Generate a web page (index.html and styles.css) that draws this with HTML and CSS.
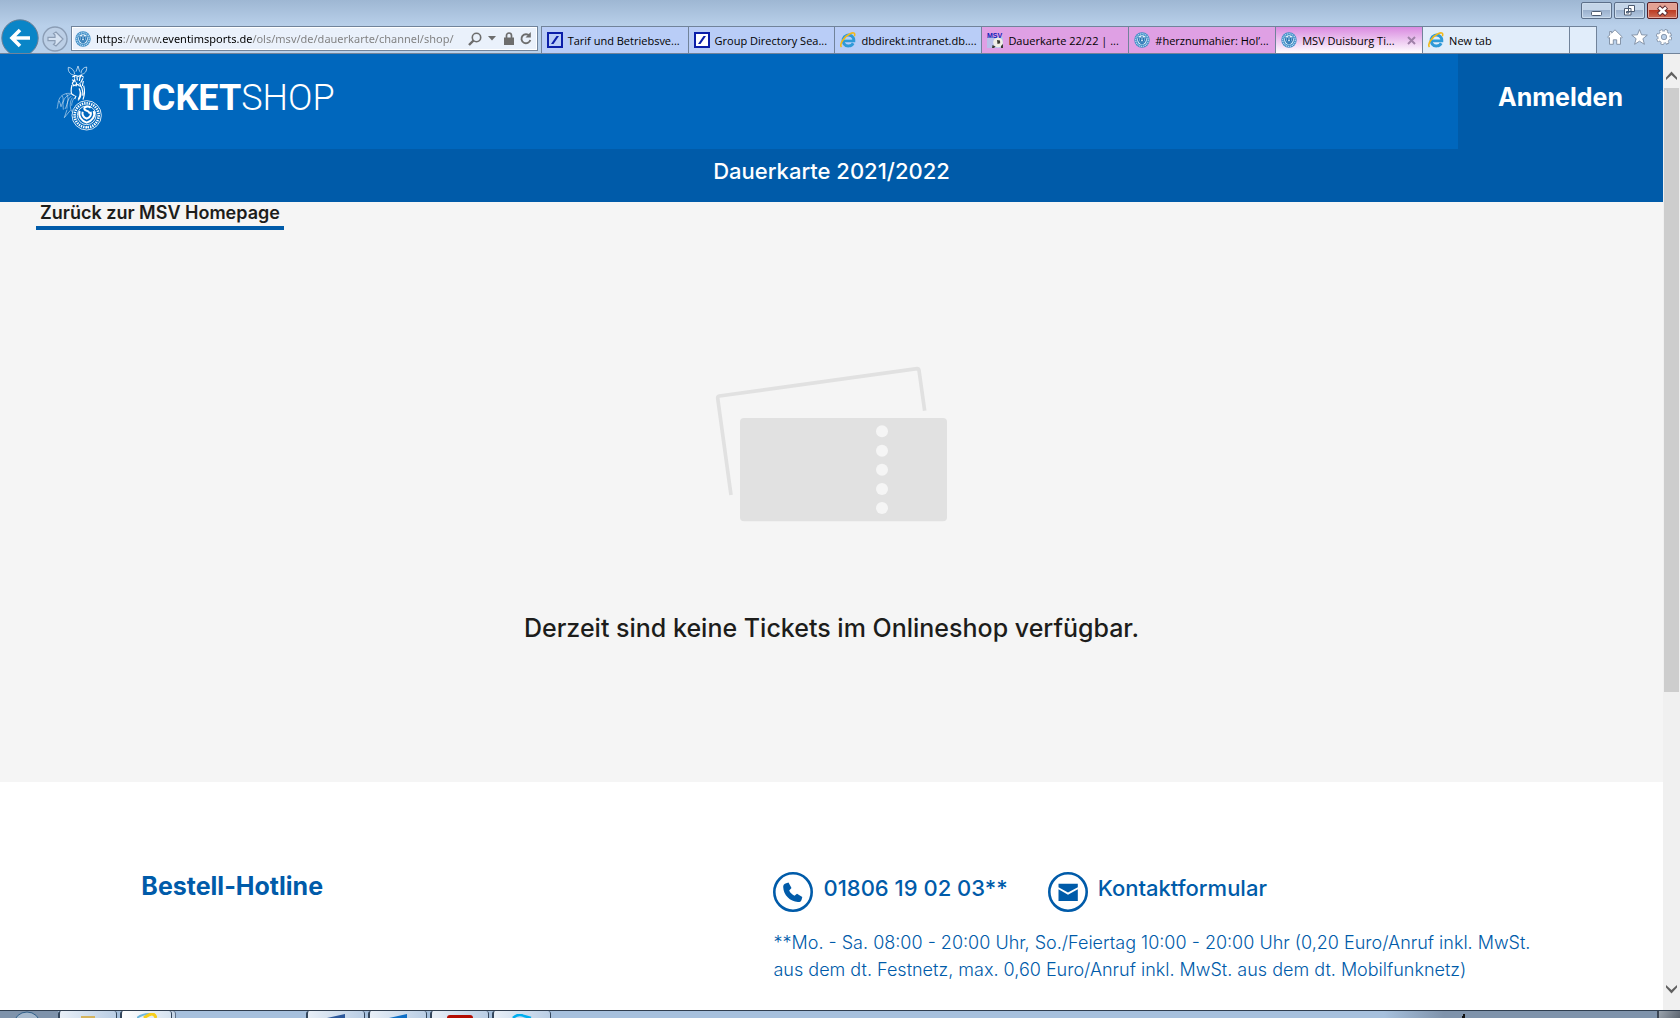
FILE: index.html
```html
<!DOCTYPE html>
<html lang="de">
<head>
<meta charset="utf-8">
<title>MSV Duisburg Ticketshop</title>
<link rel="stylesheet" href="styles.css">
</head>
<body>
<svg class="defs" aria-hidden="true">
  <symbol id="crest" viewBox="0 0 16 16">
    <circle cx="8" cy="8" r="7.7" fill="#3a8ac4"/>
    <circle cx="8" cy="8" r="6.3" fill="none" stroke="#b9dcf2" stroke-width="1.2" stroke-dasharray="1.2 .7"/>
    <circle cx="8" cy="8" r="4.8" fill="#e4f1fa"/>
    <path d="M5 5C3.800 9 6 11.500 8 12c2-.5 4.200-3 3-7M6.500 5.500c-.6 3 .5 4.500 1.500 5 1-.5 2.100-2 1.500-5M8 4v4" fill="none" stroke="#1d6fb0" stroke-width="1.200"/>
  </symbol>
  <symbol id="db" viewBox="0 0 16 16">
    <path d="M1 1h14v14H1z" fill="none" stroke="#0a1ea8" stroke-width="2"/>
    <path d="M4 12h2.500L12 4H9.500z" fill="#0a1ea8"/>
  </symbol>
  <symbol id="ie" viewBox="0 0 16 16">
    <path d="M13.200 11.200A5.500 5.500 0 1 1 13.900 8.800H4" fill="none" stroke="#2f9ad8" stroke-width="2.800"/>
    <path d="M4 7.500h8" stroke="#7cc8ee" stroke-width="1"/>
    <path d="M1.500 15C-1 12.500 4 4.500 10 1.700c4-1.800 5.500-.4 4.300 2.600" fill="none" stroke="#f2b91c" stroke-width="1.600"/>
  </symbol>
</svg>

<div class="browser">
  <header class="chrome">
    <div class="window-controls">
      <button class="wc" aria-label="Minimieren"><svg width="29" height="15" viewBox="0 0 29 15"><rect x="9.500" y="8.500" width="10" height="4" rx="1" fill="#fff" stroke="#4c5b70"/></svg></button>
      <button class="wc" aria-label="Verkleinern"><svg width="29" height="15" viewBox="0 0 29 15"><path d="M13.500 2.500h6v6h-6zM9.500 5.500h6.500v6.500H9.500z" fill="#fff" stroke="#4c5b70"/><path d="M11.500 8.500h2.500v1.500h-2.500z" fill="#8fa5c0" stroke="#4c5b70"/></svg></button>
      <button class="wc wc-close" aria-label="Schließen"><svg width="29" height="15" viewBox="0 0 29 15"><path d="M10.500 4l8 7.500M18.500 4l-8 7.500" stroke="#5b2a30" stroke-width="4.500"/><path d="M11 4.500l7 6.500M18 4.500L11 11" stroke="#fff" stroke-width="2.500"/></svg></button>
    </div>
    <div class="toolbar">
      <button class="nav-back" aria-label="Zurück">
        <svg width="38" height="38" viewBox="0 0 38 38"><circle cx="19" cy="19" r="18.200" fill="#0a85c7" stroke="#6b7f96" stroke-width="1"/><path d="M19 11l-8 8 8 8M11.500 19H29" fill="none" stroke="#fff" stroke-width="3.600"/></svg>
      </button>
      <button class="nav-forward" aria-label="Vorwärts">
        <svg width="26" height="26" viewBox="0 0 26 26"><circle cx="13" cy="13" r="12" fill="#bccfe6" stroke="#8b9db5" stroke-width="1.400"/><path d="M6 11.300h7V9l-1.500-1.500L14 6l7 7-7 7-2.500-1.500L13 17v-2.300H6z" fill="#d5e2f2" stroke="#8b9db5" stroke-width="1.200"/></svg>
      </button>
      <div class="address">
        <svg width="16" height="16"><use href="#crest"/></svg>
        <input class="url" type="text" aria-label="Adresse" value="https://www.eventimsports.de/ols/msv/de/dauerkarte/channel/shop/">
        <button class="tool" aria-label="Suchen"><svg width="14" height="14" viewBox="0 0 14 14"><circle cx="8.500" cy="5.500" r="4.200" fill="none" stroke="#6d6d6d" stroke-width="1.600"/><path d="M5.500 8.500L1 13" stroke="#6d6d6d" stroke-width="2.400"/></svg></button>
        <button class="tool" aria-label="Verlauf"><svg width="8" height="5" viewBox="0 0 8 5"><path d="M0 0h8L4 4.500z" fill="#6d6d6d"/></svg></button>
        <svg class="lock" width="10" height="13" viewBox="0 0 10 13"><path d="M2.500 6V3.500a2.500 2.500 0 0 1 5 0V6" fill="none" stroke="#6d6d6d" stroke-width="1.700"/><path d="M0 5.500h10V13H0z" fill="#6d6d6d"/></svg>
        <button class="tool" aria-label="Aktualisieren"><svg width="12" height="13" viewBox="0 0 12 13"><path d="M9.500 4A4.500 4.500 0 1 0 10.300 8" fill="none" stroke="#6d6d6d" stroke-width="1.900"/><path d="M10.800 0v5.500H5.500z" fill="#6d6d6d"/></svg></button>
      </div>
      <div class="tabs" role="tablist">
        <button class="tab tab-blue" role="tab"><svg width="16" height="16"><use href="#db"/></svg><span>Tarif und Betriebsve...</span></button>
        <button class="tab tab-blue" role="tab"><svg class="on-white" width="16" height="16"><use href="#db"/></svg><span>Group Directory Sea...</span></button>
        <button class="tab tab-blue" role="tab"><svg width="16" height="16"><use href="#ie"/></svg><span>dbdirekt.intranet.db....</span></button>
        <button class="tab tab-pink" role="tab"><svg width="16" height="16" viewBox="0 0 16 16"><path d="M0 5h16v11H0z" fill="#b9c0ea"/><circle cx="11" cy="10.500" r="4.800" fill="#f1eee6"/><path d="M10 8l3 .5.2 2.800-2.700.6zM5.500 13l3 1.500L7 16H5zM14 14l2-2v4h-2z" fill="#3b3a33"/><text x="0" y="5.500" font-family="Liberation Sans, sans-serif" font-size="7" font-weight="700" fill="#1024b8">MSV</text></svg><span>Dauerkarte 22/22 | ...</span></button>
        <button class="tab tab-pink" role="tab"><svg width="16" height="16"><use href="#crest"/></svg><span>#herznumahier: Hol’...</span></button>
        <button class="tab tab-active" role="tab" aria-selected="true"><svg width="16" height="16"><use href="#crest"/></svg><span>MSV Duisburg Ti...</span><svg class="tab-close" width="9" height="9" viewBox="0 0 9 9"><path d="M1 1l7 7M8 1L1 8" stroke="#a080a8" stroke-width="2"/></svg></button>
        <button class="tab" role="tab"><svg width="16" height="16"><use href="#ie"/></svg><span>New tab</span></button>
        <button class="tab tab-new" aria-label="Neuer Tab"></button>
      </div>
      <div class="actions">
        <button class="tool" aria-label="Startseite"><svg width="16" height="16" viewBox="0 0 16 16"><path d="M8 .8L15.300 8l-1 1.200-.8-.6v6.700H9.700v-4.500H6.300v4.500H2.500V8.600l-.8.6L.7 8l2-2V2.500h2v1.600z" fill="#fff" stroke="#7c8ba0" stroke-width=".9"/></svg></button>
        <button class="tool" aria-label="Favoriten"><svg width="17" height="16" viewBox="0 0 17 16"><path d="M8.500.6l2.100 5.200 5.700.3-4.400 3.600 1.500 5.600-4.900-3.100-4.900 3.100 1.500-5.600L.7 6.100l5.700-.3z" fill="#fff" stroke="#7c8ba0" stroke-width=".9"/></svg></button>
        <button class="tool" aria-label="Extras"><svg width="16" height="16" viewBox="0 0 16 16"><circle cx="8" cy="8" r="6.400" fill="none" stroke="#7c8ba0" stroke-width="3.200" stroke-dasharray="2.900 2.120"/><circle cx="8" cy="8" r="4.500" fill="none" stroke="#7c8ba0" stroke-width="4"/><circle cx="8" cy="8" r="6.200" fill="none" stroke="#fff" stroke-width="2" stroke-dasharray="2.200 2.670" stroke-dashoffset="-.2"/><circle cx="8" cy="8" r="4.300" fill="#b9cfe8" stroke="#fff" stroke-width="2.800"/><circle cx="8" cy="8" r="2.700" fill="none" stroke="#7c8ba0" stroke-width=".8"/></svg></button>
      </div>
    </div>
  </header>

  <div class="viewport">
    <div class="page">
      <div class="site-header">
        <a class="brand" href="#">
          <svg class="zebra" width="48" height="66" viewBox="48 30 144 198" fill="none" stroke="#fff">
            <path d="M103 60C92 60 83 50 85 37c10 1 18 9 19 20M122 58c12 0 19-9 18-22-10 1-16 8-17 18M108 50l6-17 5 17" stroke-width="2.500" opacity=".8"/>
            <path d="M97 66l8-5 9 3 10-3 7 6M96 74l6 3-5 8 5 9M103 70l3 12M111 66l1 10M120 66l-2 12M129 70l-7 13M110 82l-2 12M119 84l4 12M130 78l-3 15M101 62l4 6M124 60l-4 8" stroke-width="3.500"/>
            <path d="M96 90c-3 12-5 20 0 28l8 4M100 92l14-4 5 6M124 94c4 12 6 18 4 28M117 100c6 10 5 20-2 32M131 92c4 14 3 28-2 42M108 122l-4 10M122 112c2 10-2 18-8 24" stroke-width="3.500"/>
            <path d="M96 116C78 112 62 120 57 134c-4 10-3 20-6 27M92 118c-16 4-22 16-23 30l1 16M94 123c-10 8-14 20-13 38M97 128c-8 12-8 28-2 42M66 122c6 8 4 20-4 32M79 116c8 10 6 28-4 46M102 130c-5 8-7 14-7 22M91 166l-18 22 8-24M58 138l6 18" stroke-width="2" opacity=".75"/>
            <circle cx="140" cy="181" r="44" stroke-width="2.500"/>
            <circle cx="140" cy="181" r="36" stroke-width="8" stroke-dasharray="4 3"/>
            <circle cx="140" cy="181" r="28" fill="#0067bd" stroke-width="2.500"/>
            <path d="M119 168c-5 16 6 30 21 35 16-5 27-19 21-35M128 170c-3 11 3 17 12 21 10-4 15-11 12-21M152 158c-8-6-20-3-19 4 2 7 18 5 14 14" stroke-width="6"/>
            <circle cx="140" cy="217" r="3" fill="#fff" stroke="none"/>
          </svg>
          <span class="brand-name"><strong>TICKET</strong>SHOP</span>
        </a>
        <a class="login" href="#">Anmelden</a>
      </div>
      <nav class="subnav"><a href="#">Dauerkarte 2021/2022</a></nav>
      <main class="content">
        <a class="backlink" href="#">Zurück zur MSV Homepage</a>
        <div class="empty">
          <svg width="233" height="156" viewBox="75 48 699 468" aria-hidden="true">
            <path d="M123 435L83 144Q83 139 88 138L681 56Q686 56 687 61L704 182" fill="none" stroke="#e1e1e1" stroke-width="11"/>
            <rect x="150" y="204" width="621" height="310" rx="12" fill="#e1e1e1"/>
            <g fill="#f5f5f5"><circle cx="576" cy="244" r="18"/><circle cx="576" cy="302" r="18"/><circle cx="576" cy="359" r="18"/><circle cx="576" cy="417" r="18"/><circle cx="576" cy="474" r="18"/></g>
          </svg>
          <p>Derzeit sind keine Tickets im Onlineshop verfügbar.</p>
        </div>
      </main>
      <footer class="site-footer">
        <h2>Bestell-Hotline</h2>
        <div>
          <div class="contacts">
            <a href="#"><svg width="40" height="40" viewBox="0 0 40 40"><circle cx="20" cy="20" r="18.700" fill="none" stroke="#005ba9" stroke-width="2.600"/><path d="M12.500 11.500l3-1 3 5.500-2.300 2.500c1 2.300 3 4.300 5.300 5.200l2.500-2 5.300 3.200-.8 3c-.5 1.500-2 2.300-3.500 2.200C17 29.500 10.500 23 10.200 15c0-1.600.8-3 2.300-3.500z" fill="#005ba9"/></svg><span>01806 19 02 03**</span></a>
            <a href="#"><svg width="40" height="40" viewBox="0 0 40 40"><circle cx="20" cy="20" r="18.700" fill="none" stroke="#005ba9" stroke-width="2.600"/><path d="M10.500 11.800h19.300v3.400L20 20.500l-9.500-5.300zM10.500 17.300L20 22.700l9.800-5.400V29H10.500z" fill="#005ba9"/></svg><span>Kontaktformular</span></a>
          </div>
          <p>**Mo. - Sa. 08:00 - 20:00 Uhr, So./Feiertag 10:00 - 20:00 Uhr (0,20 Euro/Anruf inkl. MwSt.<br>aus dem dt. Festnetz, max. 0,60 Euro/Anruf inkl. MwSt. aus dem dt. Mobilfunknetz)</p>
        </div>
      </footer>
    </div>
    <div class="scrollbar">
      <button class="tool scroll-up" aria-label="Nach oben"><svg width="11" height="9" viewBox="0 0 11 9"><path d="M0 6.500L5.500.5 11 6.500V9L5.500 4 0 9z" fill="#606060"/></svg></button>
      <div class="track"><div class="thumb"></div></div>
      <button class="tool scroll-down" aria-label="Nach unten"><svg width="11" height="9" viewBox="0 0 11 9"><path d="M0 2.500L5.500 8.500 11 2.500V0L5.500 5 0 0z" fill="#606060"/></svg></button>
    </div>
  </div>

  <div class="taskbar">
    <button class="start" aria-label="Start"><svg width="28" height="7" viewBox="0 0 28 7"><ellipse cx="14" cy="13" rx="13" ry="12" fill="#a5b8cc" stroke="#2f5d86"/></svg></button>
    <button class="task" aria-label="Explorer"><svg width="16" height="2" viewBox="0 0 16 2"><path d="M1 0h14v2H1z" fill="#d5b45e"/></svg></button>
    <button class="task stacked" aria-label="Internet Explorer"><svg width="20" height="5" viewBox="0 0 20 5"><path d="M0 5Q5 1 12 1" fill="none" stroke="#6fb6dc" stroke-width="2"/><path d="M7 5Q17-3 19 5" fill="none" stroke="#f7cf1d" stroke-width="3"/></svg></button>
    <button class="task task-gap" aria-label="Word"><svg width="18" height="4" viewBox="0 0 18 4"><path d="M0 4L18 0v4z" fill="#2b579a"/></svg></button>
    <button class="task" aria-label="Outlook"><svg width="18" height="4" viewBox="0 0 18 4"><path d="M0 4L18 0v4z" fill="#0f6fc6"/></svg></button>
    <button class="task" aria-label="Reader"><svg width="26" height="3" viewBox="0 0 26 3"><path d="M0 3Q0 0 3 0H23Q26 0 26 3z" fill="#b30b00"/></svg></button>
    <button class="task" aria-label="Skype"><svg width="20" height="4" viewBox="0 0 20 4"><path d="M1 4Q6-1 12 2L19 4" fill="none" stroke="#00aff0" stroke-width="2.500"/></svg></button>
    <div class="tray"><svg width="3" height="4" viewBox="0 0 3 4"><path d="M1 0h2v4H0V2h1z" fill="#111"/></svg></div>
    <button class="desktop" aria-label="Desktop anzeigen"></button>
  </div>
</div>
</body>
</html>
```
FILE: styles.css
```css
* { box-sizing: border-box; }
body { margin: 0; font-family: Inter, "Liberation Sans", sans-serif; color: #1d1d1b; }
button { border: 0; padding: 0; background: none; font: inherit; color: inherit; }
a { color: inherit; text-decoration: none; }
svg { display: block; flex: none; }
.defs { position: absolute; width: 0; height: 0; }

.browser { display: flex; flex-direction: column; height: 100vh; overflow: hidden; }

/* Window frame */
.chrome { background: linear-gradient(#9eb7d3, #b9d0ea 26px, #b9d0ea); border-bottom: 1px solid #71839a; font-family: "Open Sans", "Noto Sans", sans-serif; font-size: 11px; }
.window-controls { display: flex; justify-content: flex-end; gap: 2px; height: 26px; padding: 2px 2px 0 0; }
.wc { height: 17px; width: 31px; border: 1px solid #5c6f89; border-radius: 2px; background: linear-gradient(#c4d5e8 45%, #9bb1cd 50%, #b6cbe3); box-shadow: inset 0 0 0 1px #ccdcec; overflow: hidden; }
.wc-close { border-color: #571c22; background: linear-gradient(#e3a193 45%, #bd3c24 50%, #cc6d57); box-shadow: inset 0 0 0 1px #e5a89c; }
.toolbar { display: flex; height: 27px; }
.nav-back { width: 38px; height: 34px; margin: -7px 3px 0 1px; overflow: hidden; }
.nav-forward { width: 26px; height: 26px; margin-right: 3px; }
.address { display: flex; align-items: center; flex: 1 1 467px; min-width: 0; height: 25px; padding: 0 5px 0 3px; border: 1px solid #71839a; background: #eaf1fb; box-shadow: inset 0 0 0 1px #fff; }
/* Scheme and host are dark, the rest of the address is grey */
.url { flex: 1; min-width: 0; padding: 0 0 0 5px; border: 0; outline: 0; font-family: "Noto Sans", sans-serif; font-size: 11px; color: transparent; background: linear-gradient(90deg, #000 31px, #7d7d7d 31px 68px, #000 68px 161px, #7d7d7d 161px); -webkit-background-clip: text; background-clip: text; }
.tool { display: flex; align-items: center; justify-content: center; }
.address .tool:nth-of-type(2) { margin: 0 8px 0 6px; }
.lock { margin-right: 6px; }
.tabs { display: flex; flex: 1 1 1057px; min-width: 0; margin-left: 3px; }
.tab { display: flex; align-items: center; flex: 1 1 147px; min-width: 0; gap: 5px; padding: 0 0 0 5px; border: 1px solid #71839a; border-width: 1px 0 0 1px; background: #e1edfa; color: #000; white-space: nowrap; }
.tab-blue { background: #b9cdf7; }
.tab-pink { background: #dfa0e4; }
.tab-active { background: linear-gradient(#d98ae0, #fff); }
.on-white { background: #fff; }
.tab-close { margin: 0 6px 0 auto; }
.tab-new { flex: 0 1 28px; padding: 0; border-right-width: 1px; }
.actions { display: flex; gap: 8px; padding: 0 8px 5px 10px; }

/* Page area and scrollbar */
.viewport { display: flex; flex: 1; min-height: 0; }
.page { display: flex; flex-direction: column; flex: 1; min-width: 0; background: #fff; }
.scrollbar { display: flex; flex-direction: column; width: 17px; background: #f0f0f0; }
.scrollbar .tool { height: 34px; }
.scroll-up { padding-top: 8px; }
.scroll-down { padding-bottom: 8px; }
.track { flex: 1; padding: 0 1px; }
.thumb { height: 68%; background: #cdcdcd; }

.site-header { display: flex; justify-content: space-between; background: #0067bd; color: #fff; }
.brand { display: flex; align-items: center; gap: 15px; height: 95px; padding: 0 0 7px 56px; }
.brand-name { font-family: Roboto, sans-serif; font-size: 36px; line-height: 40px; font-weight: 300; }
.brand-name strong { font-weight: 700; }
.login { padding: 28px 40px 0; background: #005ba9; font-size: 25px; line-height: 30px; font-weight: 700; }
.subnav { height: 53px; padding-top: 9px; background: #005ba9; color: #fff; text-align: center; font-size: 22px; line-height: 26px; font-weight: 500; }

.content { display: flex; flex-direction: column; align-items: flex-start; padding-bottom: 138px; background: #f5f5f5; }
.backlink { margin-left: 36px; padding: 0 4px 2px; border-bottom: 4px solid #005ba9; font-size: 18px; line-height: 22px; font-weight: 600; }
.empty { display: flex; flex-direction: column; align-items: center; align-self: stretch; padding-top: 136px; }
.empty p { margin: 90px 0 0; font-size: 25px; line-height: 32px; font-weight: 500; }

.site-footer { display: grid; grid-template-columns: minmax(0, 632fr) minmax(0, 748fr); width: 83%; margin: 0 auto; padding-top: 90px; color: #005ba9; }
.site-footer h2 { margin: 0; font-size: 25px; line-height: 28px; font-weight: 700; }
.contacts { display: flex; gap: 40px; font-size: 22px; line-height: 32px; font-weight: 500; }
.contacts a { display: flex; gap: 10px; }
.site-footer p { margin: 17px 0 0; font-size: 18px; line-height: 27px; font-weight: 300; white-space: nowrap; }

/* Desktop taskbar */
.taskbar { display: flex; align-items: flex-start; height: 8px; border-top: 1px solid #2f3d4e; background: #a6c0dd; overflow: hidden; }
.start { width: 58px; height: 7px; padding-left: 13px; background: #7f93ab; }
.task { display: flex; justify-content: center; align-items: flex-end; width: 59px; height: 7px; margin-right: 3px; border: 1px solid #33465c; border-width: 0 1px 0 2px; border-radius: 3px 3px 0 0; background: linear-gradient(100deg, #e8eff7, #b9cde4); }
.stacked { width: 52px; background: linear-gradient(100deg, #fff, #d5e2f0); box-shadow: 3px 0 0 #c6d5e6, 4px 0 0 #5c6f89; }
.task-gap { margin-left: 131px; }
.tray { flex: 1; height: 7px; margin-left: 830px; padding: 3px 0 0 78px; background: linear-gradient(90deg, #a6c0dd, #7f93ab 60px); }
.desktop { width: 23px; height: 7px; border-left: 2px solid #3c4654; background: linear-gradient(120deg, #9aa3ad, #5c6570); }
```
